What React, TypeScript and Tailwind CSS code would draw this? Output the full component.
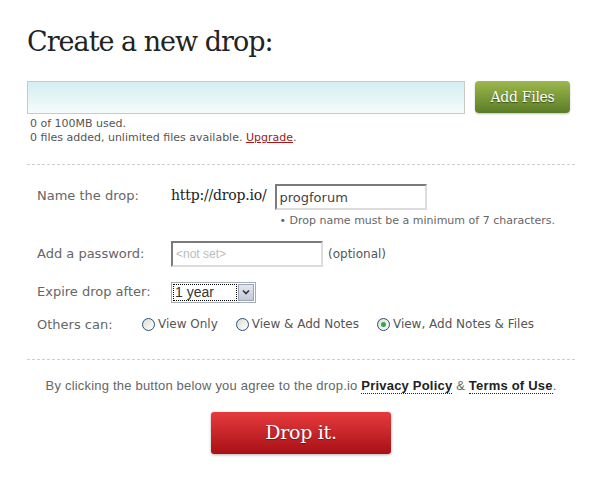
import React, { useState } from 'react';

const serif = 'font-["DejaVu_Serif",Georgia,serif]';
const sans = 'font-["DejaVu_Sans",Verdana,sans-serif]';

function Radio({ checked, label }: { checked?: boolean; label: string }) {
  return (
    <label className="flex items-center gap-[3px] text-[12px] text-[#555]">
      <span className="relative flex h-[13px] w-[13px] items-center justify-center rounded-full border border-[#2b4f72] bg-gradient-to-br from-[#dcdcd6] to-white">
        {checked && <span className="h-[5px] w-[5px] rounded-full bg-[#2fa84a]" />}
      </span>
      {label}
    </label>
  );
}

export default function App() {
  const [name, setName] = useState('progforum');

  return (
    <div className={`w-[613px] h-[477px] bg-white ${sans}`}>
      <div className="pl-[27px] pr-[38px] pt-[24px]">
        <h1 className={`${serif} text-[27px] leading-[36px] text-[#222] tracking-[-1px]`}>
          Create a new drop:
        </h1>

        {/* зона загрузки */}
        <div className="mt-[21px] flex items-start">
          <div className="h-[33px] w-[438px] border border-[#c9c9c9] bg-gradient-to-b from-[#d4eef1] to-[#f6fbfb]" />
          <button
            className={`${serif} ml-[10px] h-[32px] w-[95px] rounded-[4px] bg-gradient-to-b from-[#9db84c] to-[#5b7d27] text-[14px] tracking-[-0.3px] text-white [text-shadow:0_1px_1px_rgba(0,0,0,0.5)] shadow-[0_1px_2px_rgba(0,0,0,0.25)]`}
          >
            Add Files
          </button>
        </div>
        <div className="mt-[3px] pl-[3px] text-[11px] leading-[14px] text-[#555]">
          <p>0 of 100MB used.</p>
          <p>
            0 files added, unlimited files available.{' '}
            <a className="text-[#a3171b] underline">Upgrade</a>.
          </p>
        </div>

        <div className="mt-[19px] border-t border-dashed border-[#cfcfcf]" />

        {/* форма */}
        <div className="pl-[10px] pt-[19px] text-[13px] text-[#666]">
          <div className="flex items-start">
            <div className="w-[134px] pt-[2px]">Name the drop:</div>
            <div className={`${serif} pt-[1px] text-[14px] tracking-[-0.2px] text-[#222]`}>http://drop.io/</div>
            <div className="ml-[8px]">
              <input
                value={name}
                onChange={(e) => setName(e.target.value)}
                className="h-[26px] w-[152px] border-2 border-t-[#7b7b7b] border-l-[#7b7b7b] border-r-[#dcdcdc] border-b-[#dcdcdc] px-[3px] text-[13px] text-[#444] outline-none"
              />
              <p className="mt-[3px] pl-[5px] text-[11px] text-[#666]">
                • Drop name must be a minimum of 7 characters.
              </p>
            </div>
          </div>

          <div className="mt-[11px] flex items-center">
            <div className="w-[134px]">Add a password:</div>
            <input
              placeholder="<not set>"
              className="h-[26px] w-[152px] border-2 border-t-[#7b7b7b] border-l-[#7b7b7b] border-r-[#dcdcdc] border-b-[#dcdcdc] px-[3px] font-['Liberation_Sans',Arial,sans-serif] text-[12px] outline-none placeholder:text-[#bbb]"
            />
            <span className="ml-[5px] text-[12px] text-[#555]">(optional)</span>
          </div>

          <div className="mt-[15px] flex items-center">
            <div className="w-[134px]">Expire drop after:</div>
            <div className="flex h-[21px] w-[85px] items-stretch border border-[#a5acb2] bg-white">
              <div className="m-[1px] flex-1 border border-dotted border-black pl-[1px] font-['Liberation_Sans',Arial,sans-serif] text-[14px] leading-[15px] text-[#333]">
                1 year
              </div>
              <div className="my-[1px] mr-[1px] flex w-[16px] items-center justify-center border border-[#9aa4b8] bg-gradient-to-b from-[#e4e8f2] to-[#c2c9d9]">
                <svg width="8" height="6" viewBox="0 0 8 6">
                  <path d="M1 1.5 L4 4.5 L7 1.5" stroke="#333" strokeWidth="1.6" fill="none" />
                </svg>
              </div>
            </div>
          </div>

          <div className="mt-[12px] flex items-center">
            <div className="w-[105px]">Others can:</div>
            <div className="flex items-center gap-[18px]">
              <Radio label="View Only" />
              <Radio label="View & Add Notes" />
              <Radio checked label="View, Add Notes & Files" />
            </div>
          </div>
        </div>

        <div className="mt-[25px] border-t border-dashed border-[#cfcfcf]" />

        <p className="mt-[16px] text-center font-['Liberation_Sans',Arial,sans-serif] text-[13px] tracking-[0.2px] text-[#666]">
          By clicking the button below you agree to the drop.io{' '}
          <a className="font-bold text-[#222] border-b border-dotted border-[#222]">Privacy Policy</a> &amp;{' '}
          <a className="font-bold text-[#222] border-b border-dotted border-[#222]">Terms of Use</a>.
        </p>

        <div className="mt-[16px] flex justify-center">
          <button
            className={`${serif} h-[42px] w-[180px] rounded-[3px] bg-gradient-to-b from-[#e63a3e] to-[#a80e14] text-[19px] tracking-[-0.3px] text-white [text-shadow:0_1px_1px_rgba(0,0,0,0.4)] shadow-[0_1px_3px_rgba(0,0,0,0.3)]`}
          >
            Drop it.
          </button>
        </div>
      </div>
    </div>
  );
}
